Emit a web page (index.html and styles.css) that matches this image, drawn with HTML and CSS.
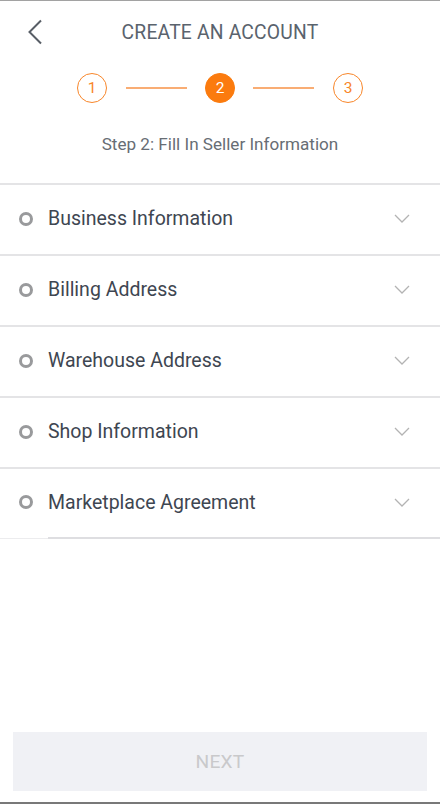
FILE: index.html
```html
<!DOCTYPE html>
<html lang="en">
<head>
<meta charset="utf-8">
<title>Create an account</title>
<link rel="stylesheet" href="styles.css">
</head>
<body>
<div class="screen">
  <header class="header">
    <button class="back" aria-label="Back">
      <svg width="16" height="26" viewBox="0 0 16 26"><path d="M14 1.5 L2.5 13 L14 24.5" fill="none" stroke="#585e66" stroke-width="2"/></svg>
    </button>
    <h1 class="title">CREATE AN ACCOUNT</h1>
  </header>

  <div class="steps">
    <span class="step">1</span>
    <span class="bar bar-a"></span>
    <span class="step active">2</span>
    <span class="bar bar-b"></span>
    <span class="step">3</span>
  </div>

  <p class="subtitle">Step 2: Fill In Seller Information</p>

  <ul class="sections">
    <li class="section"><span class="ring"></span><span class="label">Business Information</span><svg class="chev" width="16" height="9" viewBox="0 0 16 9"><path d="M1 1 L8 8 L15 1" fill="none" stroke="#b3b3b3" stroke-width="1.3"/></svg></li>
    <li class="section"><span class="ring"></span><span class="label">Billing Address</span><svg class="chev" width="16" height="9" viewBox="0 0 16 9"><path d="M1 1 L8 8 L15 1" fill="none" stroke="#b3b3b3" stroke-width="1.3"/></svg></li>
    <li class="section"><span class="ring"></span><span class="label">Warehouse Address</span><svg class="chev" width="16" height="9" viewBox="0 0 16 9"><path d="M1 1 L8 8 L15 1" fill="none" stroke="#b3b3b3" stroke-width="1.3"/></svg></li>
    <li class="section"><span class="ring"></span><span class="label">Shop Information</span><svg class="chev" width="16" height="9" viewBox="0 0 16 9"><path d="M1 1 L8 8 L15 1" fill="none" stroke="#b3b3b3" stroke-width="1.3"/></svg></li>
    <li class="section"><span class="ring"></span><span class="label">Marketplace Agreement</span><svg class="chev" width="16" height="9" viewBox="0 0 16 9"><path d="M1 1 L8 8 L15 1" fill="none" stroke="#b3b3b3" stroke-width="1.3"/></svg></li>
  </ul>
  <div class="list-end"><span class="list-end-inner"></span></div>

  <div class="spacer"></div>

  <button class="next" disabled>NEXT</button>
</div>
</body>
</html>
```

FILE: styles.css
```css
* { box-sizing: border-box; }
html, body { margin: 0; padding: 0; background: #ffffff; }
body { font-family: Roboto, "Noto Sans", "Liberation Sans", sans-serif; }

.screen {
  width: 440px;
  height: 804px;
  display: flex;
  flex-direction: column;
  border-top: 1px solid #a2a2a2;
  border-bottom: 2px solid #787878;
  background: #fff;
}

.header {
  height: 63px;
  display: flex;
  align-items: center;
  justify-content: center;
  position: relative;
}
.back {
  position: absolute;
  left: 27px;
  top: 18px;
  padding: 0;
  border: 0;
  background: none;
  display: flex;
}
.title {
  margin: 0;
  font-size: 19.3px;
  font-weight: 400;
  color: #5a636d;
  letter-spacing: 0.2px;
}

.steps {
  margin-top: 9px;
  height: 30px;
  display: flex;
  align-items: center;
  justify-content: center;
}
.step {
  width: 30px;
  height: 30px;
  border-radius: 50%;
  border: 1.5px solid #f8862a;
  color: #f8862a;
  font-size: 15.5px;
  display: flex;
  align-items: center;
  justify-content: center;
}
.step.active {
  background: #fb7b0e;
  border-color: #fb7b0e;
  color: #fff;
}
.bar {
  width: 61px;
  height: 2px;
  background: #f9ad74;
}
.bar-a { margin: 0 18px 0 19px; }
.bar-b { margin: 0 19px 0 18px; }

.subtitle {
  margin: 30px 0 0;
  line-height: 22px;
  text-align: center;
  font-size: 17.1px;
  color: #676d74;
  padding-bottom: 28px;
}

.sections {
  list-style: none;
  margin: 0;
  padding: 0;
}
.section {
  height: 71px;
  border-top: 2px solid #e4e4e6;
  display: flex;
  align-items: center;
  padding: 0 30px 2px 19px;
}
.section:last-child { height: 70px; }
.ring {
  width: 14px;
  height: 14px;
  border-radius: 50%;
  border: 3.5px solid #999a9c;
  flex: none;
}
.label {
  margin-left: 15px;
  font-size: 19.5px;
  color: #3e4651;
  flex: 1;
}
.chev { flex: none; }

.list-end {
  height: 2px;
  border-bottom: 1px solid #ececee;
  display: flex;
}
.list-end-inner {
  margin-left: 48px;
  flex: 1;
  height: 2px;
  background: #dedee1;
}

.spacer { flex: 1; }

.next {
  margin: 0 13px 11px;
  height: 59px;
  border: 0;
  background: #f0f1f5;
  color: #c9c9cb;
  font-family: Roboto, "Noto Sans", "Liberation Sans", sans-serif;
  font-size: 19.2px;
  letter-spacing: 0.2px;
}
```
